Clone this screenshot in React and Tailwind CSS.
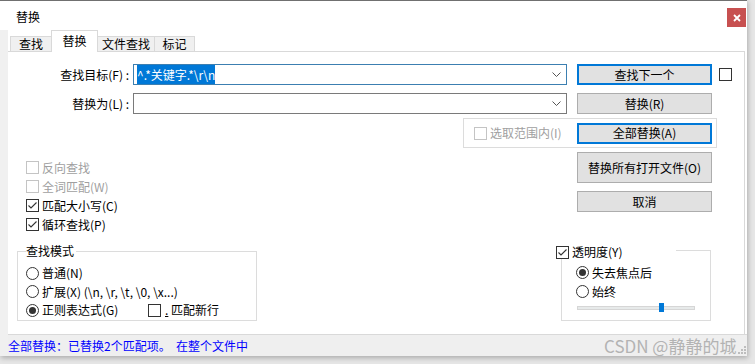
import React from "react";

function Check({ checked = false, disabled = false }) {
  return (
    <span
      className={
        disabled
          ? "flex h-[13px] w-[13px] shrink-0 items-center justify-center border border-[#c4c4c4] bg-white"
          : "flex h-[13px] w-[13px] shrink-0 items-center justify-center border border-[#333333] bg-white"
      }
    >
      {checked && (
        <svg width="11" height="11" viewBox="0 0 11 11">
          <path d="M1.5 5.5 L4 8 L9.5 2.5" fill="none" stroke="#333" strokeWidth="1.1" />
        </svg>
      )}
    </span>
  );
}

function Radio({ checked = false }) {
  return (
    <svg width="13" height="13" viewBox="0 0 13 13" className="shrink-0">
      <circle cx="6.5" cy="6.5" r="6" fill="#fff" stroke="#333" strokeWidth="1" />
      {checked && <circle cx="6.5" cy="6.5" r="3.5" fill="#333" />}
    </svg>
  );
}

function Chevron() {
  return (
    <svg width="9" height="5" viewBox="0 0 9 5" className="shrink-0">
      <path d="M0.5 0.5 L4.5 4.5 L8.5 0.5" fill="none" stroke="#555" strokeWidth="1" />
    </svg>
  );
}

export default function App() {
  return (
    <div className="relative h-[364px] w-[755px] overflow-hidden bg-[#e6e6e6] font-['Noto_Sans_CJK_SC','Liberation_Sans',sans-serif] text-[12px] leading-[16px] text-black">
      <div className="flex h-[356px] w-[747px] flex-col border-t border-[#707070] bg-white shadow-[1px_2px_5px_rgba(0,0,0,0.25)]">
        {/* title bar */}
        <div className="flex h-[29px] items-start justify-between">
          <span className="ml-[16px] mt-[8px]">替换</span>
          <span className="mr-[1px] mt-[7px] flex h-[19px] w-[19px] items-center justify-center bg-[#c75050]">
            <svg width="8" height="8" viewBox="0 0 8 8">
              <path d="M1 1 L7 7 M7 1 L1 7" stroke="#fff" strokeWidth="1.8" />
            </svg>
          </span>
        </div>

        <div className="flex flex-1">
          <div className="w-[8px] bg-[#f0f0f0]" />
          <div className="flex flex-1 flex-col">
            {/* tabs */}
            <div className="flex h-[21px] items-end pl-[2px]">
              <div className="flex h-[15px] w-[41px] items-center justify-center border-l border-t border-[#d9d9d9] bg-[#f0f0f0] leading-[14px]">
                查找
              </div>
              <div className="relative z-10 mb-[-1px] flex h-[22px] w-[47px] items-start justify-center border-l border-r border-t border-[#d9d9d9] bg-white pt-[2px]">
                替换
              </div>
              <div className="flex h-[15px] w-[56px] items-center justify-center border-t border-[#d9d9d9] bg-[#f0f0f0] leading-[14px]">
                文件查找
              </div>
              <div className="flex h-[15px] w-[41px] items-center justify-center border-l border-r border-t border-[#d9d9d9] bg-[#f0f0f0] leading-[14px]">
                标记
              </div>
            </div>

            {/* panel */}
            <div className="mr-[2px] flex flex-1 flex-col border-r border-t border-[#d9d9d9]">
              {/* row A */}
              <div className="mt-[12px] flex h-[21px] items-center">
                <span className="w-[121px] text-right">查找目标(F) :</span>
                <div className="ml-[4px] flex h-[21px] w-[434px] items-center border border-[#3c7fb1] bg-white pl-[3px] pr-[5px]">
                  <span className="flex-1">
                    <span className="bg-[#0078d7] py-[1px] text-white">{"^.*关键字.*\\r\\n"}</span>
                  </span>
                  <Chevron />
                </div>
                <div className="ml-[10px] flex h-[21px] w-[135px] items-center justify-center border-2 border-[#0078d7] bg-[#e1e1e1]">
                  查找下一个
                </div>
                <span className="ml-[7px]">
                  <Check />
                </span>
              </div>

              {/* row B */}
              <div className="mt-[8px] flex h-[21px] items-center">
                <span className="w-[121px] text-right">替换为(L) :</span>
                <div className="ml-[4px] flex h-[21px] w-[434px] items-center justify-end border border-[#7a7a7a] bg-white pr-[5px]">
                  <Chevron />
                </div>
                <div className="ml-[10px] flex h-[21px] w-[135px] items-center justify-center border border-[#adadad] bg-[#e1e1e1]">
                  替换(R)
                </div>
              </div>

              {/* row C */}
              <div className="ml-[455px] mt-[4px] flex h-[30px] w-[254px] items-center border border-[#dcdcdc]">
                <div className="ml-[10px] flex w-[103px] items-center gap-[3px] text-[#a0a0a0]">
                  <Check disabled />
                  <span>选取范围内(I)</span>
                </div>
                <div className="flex h-[21px] w-[135px] items-center justify-center border-2 border-[#0078d7] bg-[#e1e1e1]">
                  全部替换(A)
                </div>
              </div>

              {/* row D */}
              <div className="flex h-[97px]">
                <div className="flex w-[569px] flex-col pl-[18px] pt-[10px]">
                  <div className="flex h-[19px] items-center gap-[3px] text-[#a0a0a0]">
                    <Check disabled />
                    <span>反向查找</span>
                  </div>
                  <div className="flex h-[19px] items-center gap-[3px] text-[#a0a0a0]">
                    <Check disabled />
                    <span>全词匹配(W)</span>
                  </div>
                  <div className="flex h-[19px] items-center gap-[3px]">
                    <Check checked />
                    <span>匹配大小写(C)</span>
                  </div>
                  <div className="flex h-[19px] items-center gap-[3px]">
                    <Check checked />
                    <span>循环查找(P)</span>
                  </div>
                </div>
                <div className="flex flex-col pt-[4px]">
                  <div className="flex h-[31px] w-[135px] items-center justify-center border border-[#adadad] bg-[#e1e1e1]">
                    替换所有打开文件(O)
                  </div>
                  <div className="mt-[8px] flex h-[21px] w-[135px] items-center justify-center border border-[#adadad] bg-[#e1e1e1]">
                    取消
                  </div>
                </div>
              </div>

              {/* row E */}
              <div className="flex items-start">
                <div className="relative ml-[9px] mt-[6px] h-[70px] w-[240px] border border-[#dcdcdc]">
                  <span className="absolute left-[8px] top-[-9px] bg-white pr-[2px]">查找模式</span>
                  <div className="flex flex-col pl-[8px] pt-[12px]">
                    <div className="flex h-[18.5px] items-center gap-[3px]">
                      <Radio />
                      <span>普通(N)</span>
                    </div>
                    <div className="flex h-[18.5px] items-center gap-[3px]">
                      <Radio />
                      <span>{"扩展(X) (\\n, \\r, \\t, \\0, \\x...)"}</span>
                    </div>
                    <div className="flex h-[18.5px] items-center">
                      <div className="flex w-[122px] items-center gap-[3px]">
                        <Radio checked />
                        <span>正则表达式(G)</span>
                      </div>
                      <div className="flex items-center gap-[4px]">
                        <Check />
                        <span>
                          <span className="underline">.</span> 匹配新行
                        </span>
                      </div>
                    </div>
                  </div>
                </div>

                <div className="relative ml-[304px] mt-[5px] h-[71px] w-[150px] border border-[#dcdcdc]">
                  <div className="absolute left-[-6px] top-[-6px] flex h-[14px] w-[120px] items-center gap-[3px] bg-white">
                    <Check checked />
                    <span>透明度(Y)</span>
                  </div>
                  <div className="flex flex-col pl-[14px] pt-[12px]">
                    <div className="flex h-[19px] items-center gap-[3px]">
                      <Radio checked />
                      <span>失去焦点后</span>
                    </div>
                    <div className="flex h-[19px] items-center gap-[3px]">
                      <Radio />
                      <span>始终</span>
                    </div>
                    <div className="relative ml-[1px] mt-[5px] h-[4px] w-[118px] border border-[#d6d6d6] bg-[#e7eaea]">
                      <div className="absolute left-[81px] top-[-4px] h-[9px] w-[5px] bg-[#0078d7]" />
                    </div>
                  </div>
                </div>
              </div>
            </div>

            {/* status bar */}
            <div className="flex h-[22px] items-center border-t border-[#d9d9d9] bg-[#efefef] text-[#0000ff]">
              <span>全部替换：已替换2个匹配项。&nbsp; 在整个文件中</span>
            </div>
          </div>
        </div>
      </div>

      {/* watermark */}
      <div className="absolute left-[604px] top-[336px] whitespace-nowrap text-[17px] leading-[20px] text-[#b3b3b3]">
        CSDN @静静的城
      </div>
      <svg className="absolute left-[738px] top-[346px]" width="8" height="8" viewBox="0 0 8 8">
        <rect x="6" y="0" width="2" height="2" fill="#bdbdbd" />
        <rect x="3" y="3" width="2" height="2" fill="#bdbdbd" />
        <rect x="6" y="3" width="2" height="2" fill="#bdbdbd" />
        <rect x="0" y="6" width="2" height="2" fill="#bdbdbd" />
        <rect x="3" y="6" width="2" height="2" fill="#bdbdbd" />
        <rect x="6" y="6" width="2" height="2" fill="#bdbdbd" />
      </svg>
    </div>
  );
}
